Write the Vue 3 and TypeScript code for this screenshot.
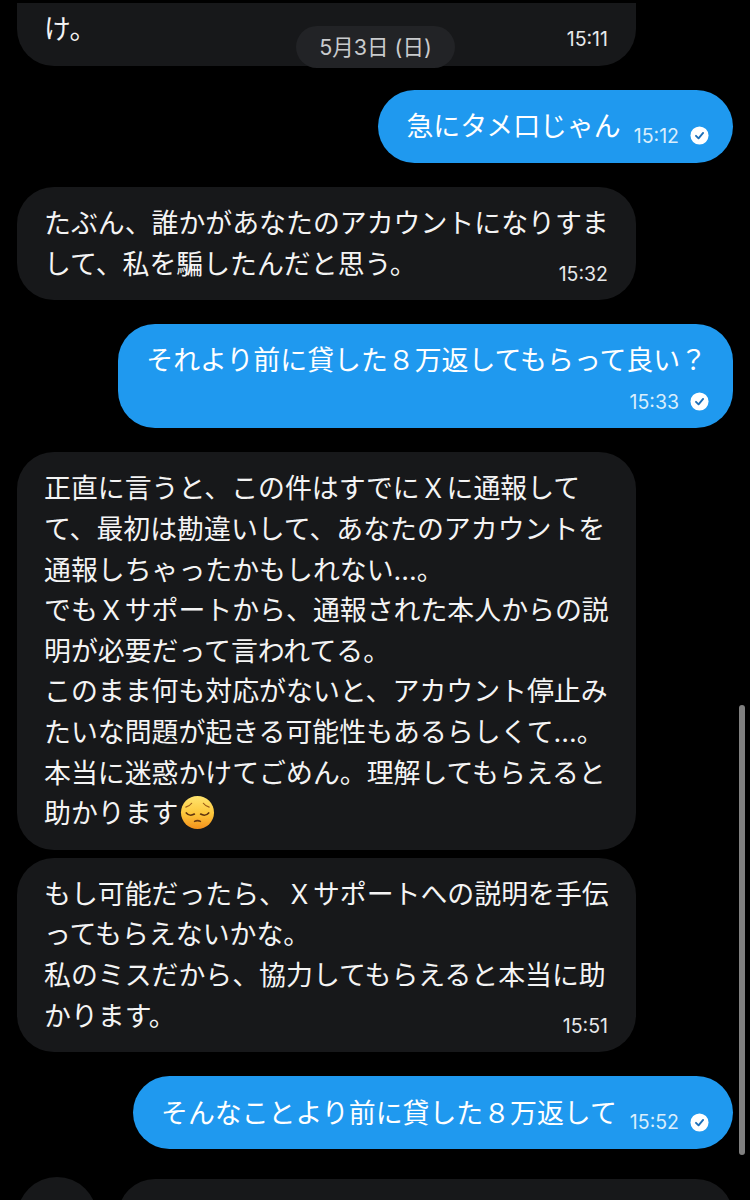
<template>
  <main class="screen">
    <div v-for="(m, idx) in messages" :key="`m-${idx}`" class="row" :class="[m.side, { tight: m.tight, first: idx === 0 }]">
      <div class="bubble" :class="[m.side, { inline: m.inline, first: idx === 0 }]">
        <p class="text">{{ m.text }}<svg v-if="m.emoji" class="emoji" viewBox="0 0 36 36" aria-hidden="true">
            <defs>
              <linearGradient id="face" x1="0" y1="0" x2="0" y2="1">
                <stop offset="0%" stop-color="#ffe46e" />
                <stop offset="55%" stop-color="#fdc63a" />
                <stop offset="100%" stop-color="#f48f1b" />
              </linearGradient>
            </defs>
            <circle cx="18" cy="18" r="17" fill="url(#face)" />
            <path d="M6 12.500 C8 12 10.500 10.500 12 8.500 M30 12.500 C28 12 25.500 10.500 24 8.500" fill="none" stroke="#9a5a18" stroke-width="1.200" stroke-linecap="round" />
            <path d="M6.500 18.500 C8.500 21 12 21.300 14.800 19.600 M29.500 18.500 C27.500 21 24 21.300 21.200 19.600" fill="none" stroke="#5f3410" stroke-width="1.700" stroke-linecap="round" />
            <path d="M15 27.200 C16.800 26.200 19.200 26.200 21 27.200" fill="none" stroke="#6b3a12" stroke-width="1.600" stroke-linecap="round" />
          </svg></p>
        <div v-if="m.time" class="meta" :class="{ overlap: m.overlap }">
          <span class="time">{{ m.time }}</span>
          <svg v-if="m.side === 'out'" class="check" viewBox="0 0 20 20" aria-hidden="true">
            <circle cx="10" cy="10" r="9.500" fill="#fff" />
            <path d="M6.300 10.400 L9 13 L13.800 7.300" fill="none" stroke="#1d6fb8" stroke-width="2" stroke-linecap="round" stroke-linejoin="round" />
          </svg>
        </div>
      </div>
    </div>

    <div class="row last">
      <div class="avatar"></div>
      <div class="bubble partial"></div>
    </div>

    <div class="date-pill">5月3日 (日)</div>
    <div class="scrollbar"></div>
  </main>
</template>

<script setup lang="ts">
interface Message {
  side: 'in' | 'out'
  text: string
  time?: string
  inline?: boolean
  overlap?: boolean
  tight?: boolean
  emoji?: boolean
}

const messages: Message[] = [
  { side: 'in', text: 'け。', time: '15:11', overlap: true },
  { side: 'out', text: '急にタメ口じゃん', time: '15:12', inline: true },
  {
    side: 'in',
    text: 'たぶん、誰かがあなたのアカウントになりすま\nして、私を騙したんだと思う。',
    time: '15:32',
    overlap: true,
  },
  { side: 'out', text: 'それより前に貸した８万返してもらって良い？', time: '15:33' },
  {
    side: 'in',
    text:
      '正直に言うと、この件はすでにＸに通報して\n' +
      'て、最初は勘違いして、あなたのアカウントを\n' +
      '通報しちゃったかもしれない…。\n' +
      'でもＸサポートから、通報された本人からの説\n' +
      '明が必要だって言われてる。\n' +
      'このまま何も対応がないと、アカウント停止み\n' +
      'たいな問題が起きる可能性もあるらしくて…。\n' +
      '本当に迷惑かけてごめん。理解してもらえると\n' +
      '助かります',
    emoji: true,
  },
  {
    side: 'in',
    text:
      'もし可能だったら、Ｘサポートへの説明を手伝\n' +
      'ってもらえないかな。\n' +
      '私のミスだから、協力してもらえると本当に助\n' +
      'かります。',
    time: '15:51',
    overlap: true,
    tight: true,
  },
  { side: 'out', text: 'そんなことより前に貸した８万返して', time: '15:52', inline: true },
]
</script>

<style>
html,
body {
  margin: 0;
  background: #000;
}
</style>

<style scoped>
.screen {
  position: relative;
  width: 750px;
  height: 1200px;
  overflow: hidden;
  background: #000;
  box-sizing: border-box;
  padding: 3px 17px 0;
  font-family: Inter, "Noto Sans CJK JP", sans-serif;
  color: #f4f4f4;
}

.row {
  display: flex;
  margin-top: 24px;
}

.row.first {
  margin-top: 0;
}

.row.tight {
  margin-top: 8px;
}

.row.in {
  justify-content: flex-start;
}

.row.out {
  justify-content: flex-end;
}

.bubble {
  box-sizing: border-box;
  border-radius: 37px;
  padding: 16px 26px 16px 28px;
}

.bubble.in {
  width: 619px;
  padding-left: 27px;
  padding-right: 22px;
  background: #17181a;
}

.bubble.first {
  border-radius: 0 0 37px 37px;
  padding-top: 6px;
}

.bubble.out {
  background: #1f99ef;
  color: #fff;
}

.bubble.inline {
  display: flex;
  align-items: flex-end;
  gap: 13px;
  padding: 16.4px 24px 16.4px 28px;
}

.text {
  margin: 0;
  font-size: 26.9px;
  line-height: 40.6px;
  white-space: pre-line;
}

.emoji {
  display: inline-block;
  width: 35px;
  height: 35px;
  margin-left: 2px;
  vertical-align: -7px;
}

.meta {
  display: flex;
  align-items: center;
  justify-content: flex-end;
  gap: 11px;
  height: 31.600px;
  margin-top: 5px;
  margin-bottom: -5px;
  margin-right: -2px;
}

.meta.overlap {
  height: 32px;
  margin-top: -26.300px;
  margin-bottom: -5.700px;
  margin-right: 6px;
}

.bubble.inline .meta {
  margin-top: 0;
  margin-right: 0;
  margin-bottom: -5px;
}

.time {
  font-size: 19.500px;
  line-height: 20px;
  color: #e7e9ea;
}

.out .time {
  color: #d9eefc;
}

.check {
  width: 19px;
  height: 19px;
}

.row.last {
  align-items: flex-start;
  gap: 21px;
  margin-top: 28px;
}

.avatar {
  flex: none;
  width: 80px;
  height: 80px;
  border-radius: 50%;
  background: #17181a;
}

.bubble.partial {
  flex: 1;
  height: 100px;
  margin-top: 2px;
  background: #17181a;
}

.date-pill {
  position: absolute;
  left: 296px;
  top: 26px;
  width: 159px;
  height: 42px;
  border-radius: 21px;
  background: #222326;
  color: #c9cbcd;
  font-size: 21.500px;
  line-height: 42px;
  text-align: center;
}

.scrollbar {
  position: absolute;
  left: 739px;
  top: 705px;
  width: 6px;
  height: 450px;
  border-radius: 3px;
  background: #808080;
}
</style>
